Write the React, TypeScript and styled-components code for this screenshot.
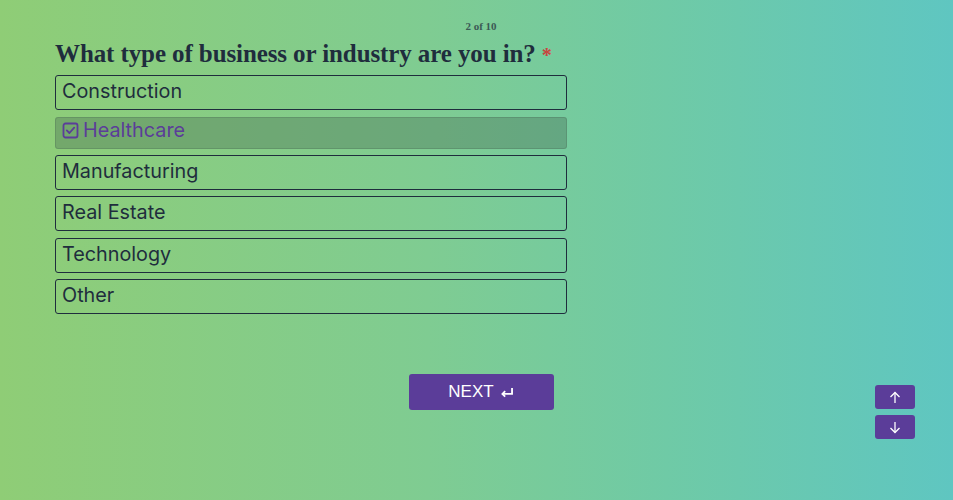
import * as React from 'react';
import styled, { createGlobalStyle } from 'styled-components';

const GlobalStyle = createGlobalStyle`
  html, body {
    margin: 0;
    padding: 0;
  }
  body {
    font-family: Inter, "Noto Sans", sans-serif;
  }
`;

const Page = styled.div`
  width: 953px;
  height: 500px;
  box-sizing: border-box;
  padding: 20px 46px 0 55px;
  background: linear-gradient(90deg, #8fcd76 0%, #7fcc92 45%, #6fcaa6 70%, #5fc6c1 100%);
  color: #1f2d3d;
  position: relative;
  overflow: hidden;
`;

const Counter = styled.div`
  text-align: center;
  font-family: "Liberation Serif", serif;
  font-weight: 700;
  font-size: 11px;
  color: #3b5a55;
  height: 16px;
`;

const Question = styled.h1`
  margin: 3px 0 5px;
  font-family: "Liberation Serif", serif;
  font-weight: 700;
  font-size: 25px;
  line-height: 30px;
  color: #1f2d3d;
  letter-spacing: -0.1px;
`;

const Required = styled.span`
  color: #c9443d;
  font-size: 20px;
  margin-left: 6px;
`;

const Options = styled.div`
  width: 512px;
  display: flex;
  flex-direction: column;
  gap: 6.5px;
`;

const Option = styled.div<{ $selected?: boolean }>`
  box-sizing: border-box;
  height: ${p => (p.$selected ? '32px' : '35px')};
  margin-bottom: ${p => (p.$selected ? '-0.5px' : '0')};
  display: flex;
  align-items: center;
  gap: 4px;
  padding: 0 6px;
  border-radius: 3px;
  border: 1px solid ${p => (p.$selected ? 'rgba(60, 90, 70, 0.25)' : '#1f2d3d')};
  background: ${p => (p.$selected ? 'rgba(70, 100, 80, 0.35)' : 'transparent')};
  color: ${p => (p.$selected ? '#5b3d99' : '#1f2d3d')};
  font-size: 19.8px;
  line-height: 1;
  padding-bottom: ${p => (p.$selected ? '4px' : '1px')};
`;

const Footer = styled.div`
  display: flex;
  justify-content: center;
  margin-top: 60px;
`;

const NextButton = styled.button`
  width: 145px;
  height: 36px;
  border: none;
  border-radius: 3px;
  background: #5b3d99;
  color: #fff;
  font-family: "Liberation Sans", Arial, sans-serif;
  font-size: 17px;
  display: flex;
  align-items: center;
  justify-content: center;
  gap: 6px;
  padding: 0;
`;

const Nav = styled.div`
  position: absolute;
  right: 38px;
  top: 385px;
  display: flex;
  flex-direction: column;
  gap: 6px;
`;

const NavButton = styled.button`
  width: 40px;
  height: 24px;
  border: none;
  border-radius: 3px;
  background: #5b3d99;
  color: #fff;
  display: flex;
  align-items: center;
  justify-content: center;
  padding: 0;
`;

const CheckIcon = () => (
  <svg width="17" height="17" viewBox="0 0 17 17" fill="none" stroke="#5b3d99" strokeWidth="1.8">
    <rect x="1.5" y="1.5" width="14" height="14" rx="2" />
    <path d="M4.8 8.4 L7.4 11 L12.2 5.6" strokeLinecap="round" strokeLinejoin="round" />
  </svg>
);

const EnterIcon = () => (
  <svg width="14" height="11" viewBox="0 0 15 12" fill="none" stroke="#fff" strokeWidth="2">
    <path d="M13 1 V7.5 H3" />
    <path d="M5.5 4.5 L2.5 7.5 L5.5 10.5" strokeLinejoin="miter" />
  </svg>
);

const Arrow = ({ down }: { down?: boolean }) => (
  <svg width="12" height="13" viewBox="0 0 12 13" fill="none" stroke="#fff" strokeWidth="1.3"
    style={down ? { transform: 'rotate(180deg)' } : undefined}>
    <path d="M6 12 V1.5" />
    <path d="M1.5 6 L6 1.5 L10.5 6" />
  </svg>
);

const choices = ['Construction', 'Healthcare', 'Manufacturing', 'Real Estate', 'Technology', 'Other'];

const App = () => {
  const selected = 'Healthcare';
  return (
    <Page>
      <GlobalStyle />
      <Counter>2 of 10</Counter>
      <Question>
        What type of business or industry are you in?<Required>*</Required>
      </Question>
      <Options>
        {choices.map(c => (
          <Option key={c} $selected={c === selected}>
            {c === selected && <CheckIcon />}
            {c}
          </Option>
        ))}
      </Options>
      <Footer>
        <NextButton>
          NEXT <EnterIcon />
        </NextButton>
      </Footer>
      <Nav>
        <NavButton><Arrow /></NavButton>
        <NavButton><Arrow down /></NavButton>
      </Nav>
    </Page>
  );
};

export default App;
